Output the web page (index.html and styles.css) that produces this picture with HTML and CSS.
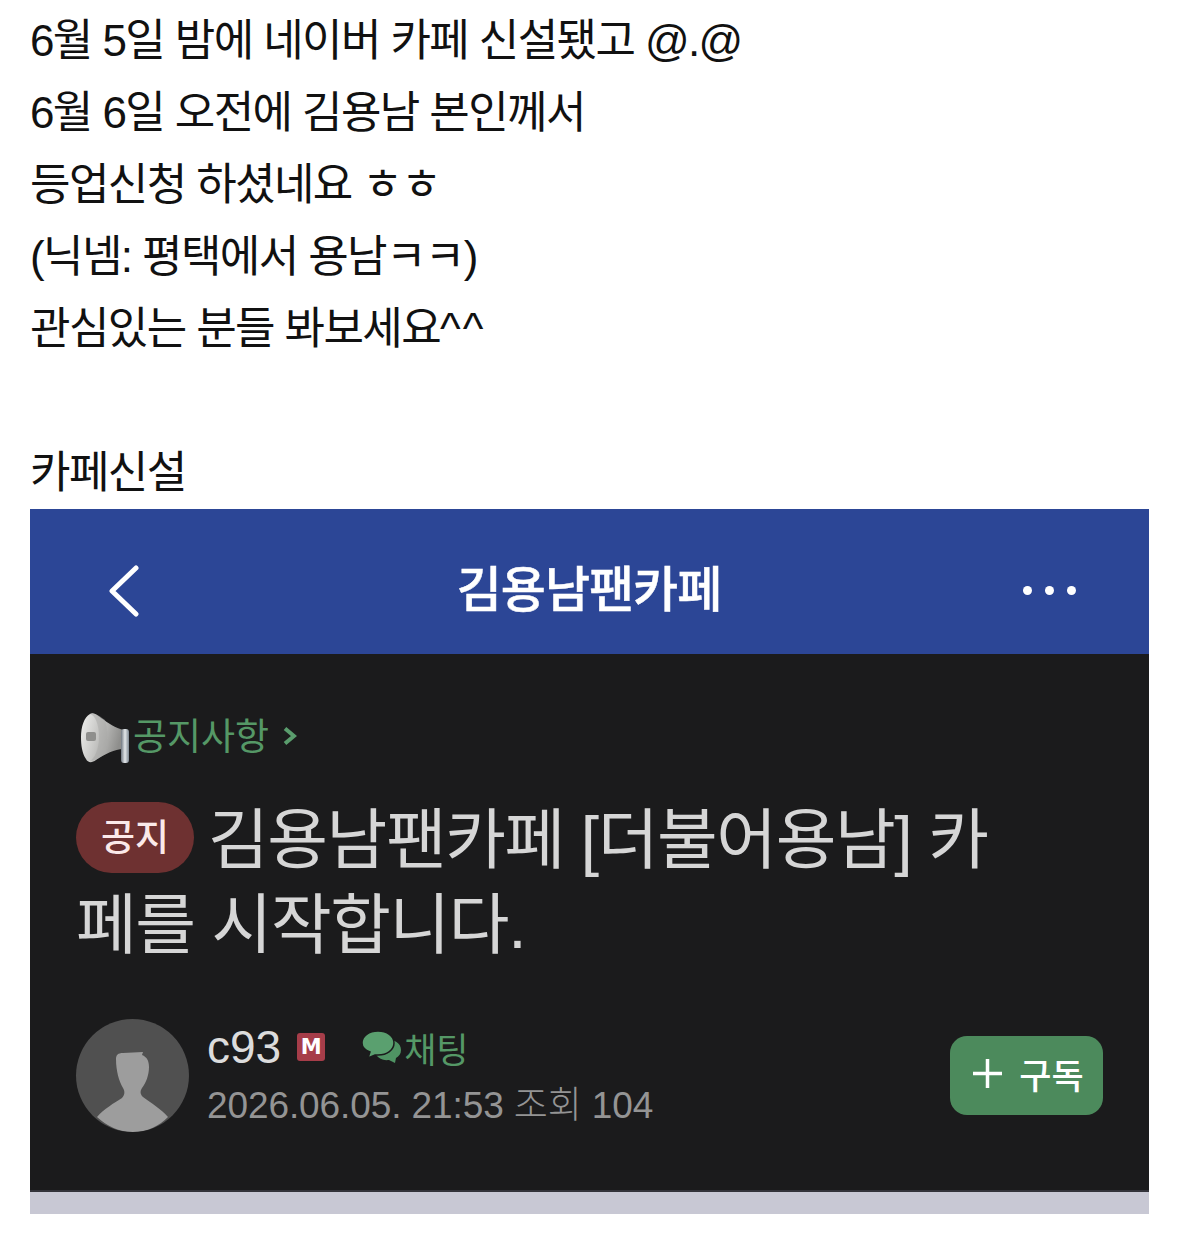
FILE: index.html
```html
<!DOCTYPE html>
<html lang="ko">
<head>
    <meta charset="UTF-8">
    <meta name="viewport" content="width=device-width, initial-scale=1.0">
    <title>카페신설</title>
    <link rel="stylesheet" href="styles.css">
</head>
<body>

    <div class="post">
        <p>6월 5일 밤에 네이버 카페 신설됐고 @.@</p>
        <p>6월 6일 오전에 김용남 본인께서</p>
        <p>등업신청 하셨네요 ㅎㅎ</p>
        <p>(닉넴: 평택에서 용남ㅋㅋ)</p>
        <p>관심있는 분들 봐보세요<span class="carets">^^</span></p>
        <p>&nbsp;</p>
        <p>카페신설</p>
    </div>

    <div class="shot">
        <div class="topbar">
            <svg class="back" width="32" height="52" viewBox="0 0 32 52">
                <path d="M28 3 L4 26 L28 49" fill="none" stroke="#fff" stroke-width="5" stroke-linecap="round" stroke-linejoin="round"/>
            </svg>
            <h1>김용남팬카페</h1>
            <div class="dots"><span></span><span></span><span></span></div>
        </div>

        <div class="article">
            <div class="board">
                <svg class="horn" width="50" height="52" viewBox="0 0 50 52">
                    <defs>
                        <linearGradient id="hornBody" x1="0" y1="0" x2="1" y2="0.3">
                            <stop offset="0" stop-color="#f0f0ee"/>
                            <stop offset="0.5" stop-color="#c4c4c2"/>
                            <stop offset="1" stop-color="#8e8e8c"/>
                        </linearGradient>
                        <linearGradient id="hornGrip" x1="0" y1="0" x2="1" y2="0">
                            <stop offset="0" stop-color="#6f7780"/>
                            <stop offset="0.5" stop-color="#e4e8ea"/>
                            <stop offset="1" stop-color="#7d8892"/>
                        </linearGradient>
                    </defs>
                    <path d="M9 2 C13 0 16 3 20 6 C27 11 35 16 42 18 L42 37 C34 37 24 42 15 48 C11 51 7 51 5 47 C1 41 0 33 0 25 C0 15 3 5 9 2 Z" fill="url(#hornBody)"/>
                    <path d="M9 2 C14 3 18 12 18 25 C18 38 13 47 9 49 C14 49 20 45 24 42 C27 34 27 16 24 8 C20 5 13 0 9 2 Z" fill="#a9a9a7" opacity="0.55"/>
                    <rect x="5" y="20" width="10" height="9" rx="2" fill="#8f8f8d"/>
                    <rect x="40" y="17" width="8" height="34" rx="3" fill="url(#hornGrip)"/>
                </svg>
                <span class="board-name">공지사항</span>
                <svg class="more" width="14" height="20" viewBox="0 0 14 20">
                    <path d="M2 2.5 L11 10 L2 17.5" fill="none" stroke="#5a9d6d" stroke-width="4"/>
                </svg>
            </div>

            <h2><span class="tag">공지</span> 김용남팬카페 [더불어용남] 카페를 시작합니다.</h2>

            <div class="meta">
                <div class="avatar">
                    <svg width="113" height="113" viewBox="0 0 113 113">
                        <path d="M40 40 C40 36 42 34 47 34 L67 33 L66 36 C71 38 73 42 73 48 C73 56 70 64 66 69 C64 72 64 75 67 78 C75 84 85 90 92 98 C83 107 71 113 57 113 C43 113 31 107 21 98 C28 90 38 84 46 79 C49 76 49 72 47 69 C43 62 40 52 40 40 Z" fill="#9d9d9d"/>
                    </svg>
                </div>
                <div class="info">
                    <div class="writer">
                        <span class="nick">c93</span>
                        <span class="badge">M</span>
                        <svg class="bubbles" width="40" height="34" viewBox="0 0 40 34">
                            <path d="M24 9 C32 9 39 13 39 20 C39 24 37 26 34 28 L33 33 L27 30 C20 31 14 27 13 22 Z" fill="#4f9363"/>
                            <path d="M16 1 C25 1 32 6 32 13 C32 20 25 25 16 25 L13 25 L6 28 L8 22 C3 20 0 17 0 13 C0 6 7 1 16 1 Z" fill="#5aa06f" stroke="#1b1b1c" stroke-width="1.5"/>
                        </svg>
                        <span class="chat">채팅</span>
                    </div>
                    <div class="date">2026.06.05. 21:53 조회 104</div>
                </div>
                <button class="subscribe">
                    <svg width="29" height="29" viewBox="0 0 29 29">
                        <path d="M0 14.5 H29 M14.5 0 V29" stroke="#fff" stroke-width="3.5"/>
                    </svg>
                    <span>구독</span>
                </button>
            </div>
        </div>

        <div class="strip"></div>
    </div>

</body>
</html>
```

FILE: styles.css
```css
/* General Styles */
body {
    font-family: "Liberation Sans", "Noto Sans CJK KR", sans-serif;
    margin: 0;
    padding: 5px 30px 0;
    background: #fff;
    color: #111;
}

.post p {
    margin: 0;
    font-size: 44px;
    font-weight: 400;
    letter-spacing: -1.6px;
    line-height: 72px;
    height: 72px;
    white-space: nowrap;
}

.carets {
    letter-spacing: 2px;
}

.shot {
    width: 1119px;
}

.topbar {
    height: 145px;
    box-sizing: border-box;
    background: #2c4696;
    display: flex;
    align-items: center;
    justify-content: space-between;
    padding: 18px 73px 0 78px;
    color: #fff;
}

.topbar h1 {
    margin: 0 0 0 15px;
    font-size: 49px;
    font-weight: 500;
    -webkit-text-stroke: 0.5px #fff;
    line-height: 1;
    letter-spacing: -1px;
}

.dots {
    display: flex;
    gap: 13px;
}

.dots span {
    width: 9px;
    height: 9px;
    border-radius: 50%;
    background: #fff;
}

.article {
    height: 536px;
    box-sizing: border-box;
    background: #1b1b1c;
    padding: 58px 46px 0;
}

.board {
    display: flex;
    align-items: center;
    height: 52px;
    color: #559866;
    font-size: 37px;
    margin-left: 5px;
}

.board-name {
    padding-bottom: 8px;
    margin-left: 2px;
}

.more {
    margin-left: 14px;
    margin-bottom: 5px;
}

.article h2 {
    margin: 34px 0 0;
    width: 950px;
    font-size: 66px;
    font-weight: 400;
    letter-spacing: -1.4px;
    line-height: 85px;
    color: #d6d6d6;
}

.tag {
    display: inline-block;
    vertical-align: 12px;
    width: 118px;
    height: 71px;
    margin-right: -3px;
    line-height: 74px;
    border-radius: 36px;
    background: #6e3131;
    color: #fbe9e9;
    text-align: center;
    font-size: 37px;
    font-weight: 500;
    letter-spacing: 0;
}

.meta {
    display: flex;
    align-items: center;
    margin-top: 51px;
}

.avatar {
    width: 113px;
    height: 113px;
    border-radius: 50%;
    background: #505050;
    overflow: hidden;
    flex: none;
}

.avatar svg {
    display: block;
}

.info {
    margin-left: 18px;
    flex: 1;
}

.writer {
    display: flex;
    align-items: center;
    height: 50px;
}

.nick {
    font-size: 46px;
    color: #dcdcdc;
}

.badge {
    margin-left: 16px;
    width: 28px;
    height: 28px;
    border-radius: 3px;
    background: #a63d49;
    color: #fff;
    font-family: "DejaVu Sans", sans-serif;
    font-size: 21px;
    font-weight: 700;
    line-height: 28px;
    text-align: center;
}

.bubbles {
    margin-left: 37px;
}

.chat {
    margin-left: 2px;
    font-size: 35px;
    color: #559866;
}

.date {
    margin-top: 3px;
    font-size: 37px;
    font-weight: 300;
    letter-spacing: -0.1px;
    color: #949494;
}

.subscribe {
    width: 153px;
    height: 79px;
    border: none;
    border-radius: 17px;
    background: #4c8a5c;
    color: #fff;
    font-family: inherit;
    font-size: 35px;
    font-weight: 500;
    display: flex;
    align-items: center;
    justify-content: center;
    gap: 17px;
    padding: 0 0 4px 4px;
}

.strip {
    height: 24px;
    background: #c8c8d4;
    border-top: 2px solid #33333a;
    box-sizing: border-box;
}
```
